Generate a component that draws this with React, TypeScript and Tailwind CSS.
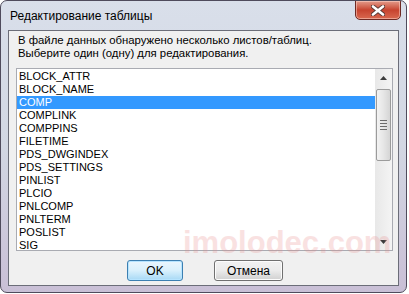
const ITEMS = [
  'BLOCK_ATTR',
  'BLOCK_NAME',
  'COMP',
  'COMPLINK',
  'COMPPINS',
  'FILETIME',
  'PDS_DWGINDEX',
  'PDS_SETTINGS',
  'PINLIST',
  'PLCIO',
  'PNLCOMP',
  'PNLTERM',
  'POSLIST',
  'SIG',
]

const CloseButton = () => (
  <div className="w-[46px] h-[20px] -mt-px rounded-b-[5px] border border-[#6e2a24] bg-gradient-to-b from-[#e29a8a] via-[#c7432f] to-[#d9684f] flex items-center justify-center shadow-[inset_0_0_0_1px_rgba(255,220,210,0.5)]">
    <svg width="14" height="11" viewBox="0 0 14 11">
      <path
        d="M2 1.5 L12 9.5 M12 1.5 L2 9.5"
        stroke="#5a3a36"
        strokeWidth="4.4"
        strokeLinecap="round"
      />
      <path
        d="M2 1.5 L12 9.5 M12 1.5 L2 9.5"
        stroke="#ffffff"
        strokeWidth="2.6"
        strokeLinecap="round"
      />
    </svg>
  </div>
)

const ScrollBar = () => (
  <div className="w-[17px] h-full bg-gradient-to-r from-[#e8e8e8] to-[#f4f4f4] flex flex-col items-center">
    <div className="h-[17px] w-full flex items-center justify-center">
      <svg width="7" height="4" viewBox="0 0 7 4">
        <path d="M3.5 0 L7 4 L0 4 Z" fill="#3c3c3c" />
      </svg>
    </div>
    <div className="mt-[3px] w-[15px] h-[72px] rounded-[2px] border border-[#9b9b9b] bg-gradient-to-r from-[#f3f3f3] via-[#e6e6e6] to-[#d5d5d5] flex flex-col items-center justify-center gap-[2px]">
      <div className="w-[7px] h-px bg-[#6b6b6b]" />
      <div className="w-[7px] h-px bg-[#6b6b6b]" />
      <div className="w-[7px] h-px bg-[#6b6b6b]" />
      <div className="w-[7px] h-px bg-[#6b6b6b]" />
    </div>
    <div className="flex-1" />
    <div className="h-[17px] w-full flex items-center justify-center">
      <svg width="7" height="4" viewBox="0 0 7 4">
        <path d="M0 0 L7 0 L3.5 4 Z" fill="#3c3c3c" />
      </svg>
    </div>
  </div>
)

export default function App() {
  return (
    <div className="w-[409px] h-[294px] bg-white font-['Liberation_Sans',Arial,sans-serif]">
      <div className="relative w-[407px] h-[293px] rounded-[7px] border border-[#4f4b5c] bg-gradient-to-b from-[#d9dfea] via-[#d2d7e3] to-[#c9bfd6] flex flex-col overflow-hidden">
        <div className="h-[29px] flex items-start justify-between pl-[9px] pr-[5px]">
          <span className="mt-[8px] text-[12px] text-black leading-[14px]">
            Редактирование таблицы
          </span>
          <CloseButton />
        </div>
        <div className="mx-[7px] h-[256px] border border-[#6b6d78] bg-[#f0f0f0] flex flex-col">
          <div className="pl-[9px] pt-[3px] text-[11.35px] leading-[13px] text-black">
            <div>В файле данных обнаружено несколько листов/таблиц.</div>
            <div>Выберите один (одну) для редактирования.</div>
          </div>
          <div className="ml-[7px] mt-[8px] w-[377px] h-[183px] border border-[#a9abb2] bg-white flex">
            <div className="flex-1 pt-px">
              {ITEMS.map((item) => (
                <div
                  key={item}
                  className={
                    item === 'COMP'
                      ? 'h-[13px] pl-[2px] text-[11px] leading-[13px] bg-[#3399ff] text-white'
                      : 'h-[13px] pl-[2px] text-[11px] leading-[13px] text-black'
                  }
                >
                  {item}
                </div>
              ))}
            </div>
            <ScrollBar />
          </div>
          <div className="mt-[9px] flex pl-[118px] gap-[31px]">
            <button className="w-[56px] h-[21px] rounded-[3px] border border-[#3c7fb1] bg-gradient-to-b from-[#eaf6fd] via-[#d9f0fc] to-[#a7d9f5] text-[12px] text-black shadow-[inset_0_0_0_1px_#b6e4ff]">
              OK
            </button>
            <button className="w-[69px] h-[21px] rounded-[3px] border border-[#707070] bg-gradient-to-b from-[#f2f2f2] via-[#ebebeb] to-[#d0d0d0] text-[12px] text-black shadow-[inset_0_0_0_1px_#fcfcfc]">
              Отмена
            </button>
          </div>
        </div>
        <div className="absolute left-[182px] top-[219px] text-[31px] font-bold text-[#e88a8a] opacity-25 pointer-events-none">
          imolodec.com
        </div>
      </div>
    </div>
  )
}
